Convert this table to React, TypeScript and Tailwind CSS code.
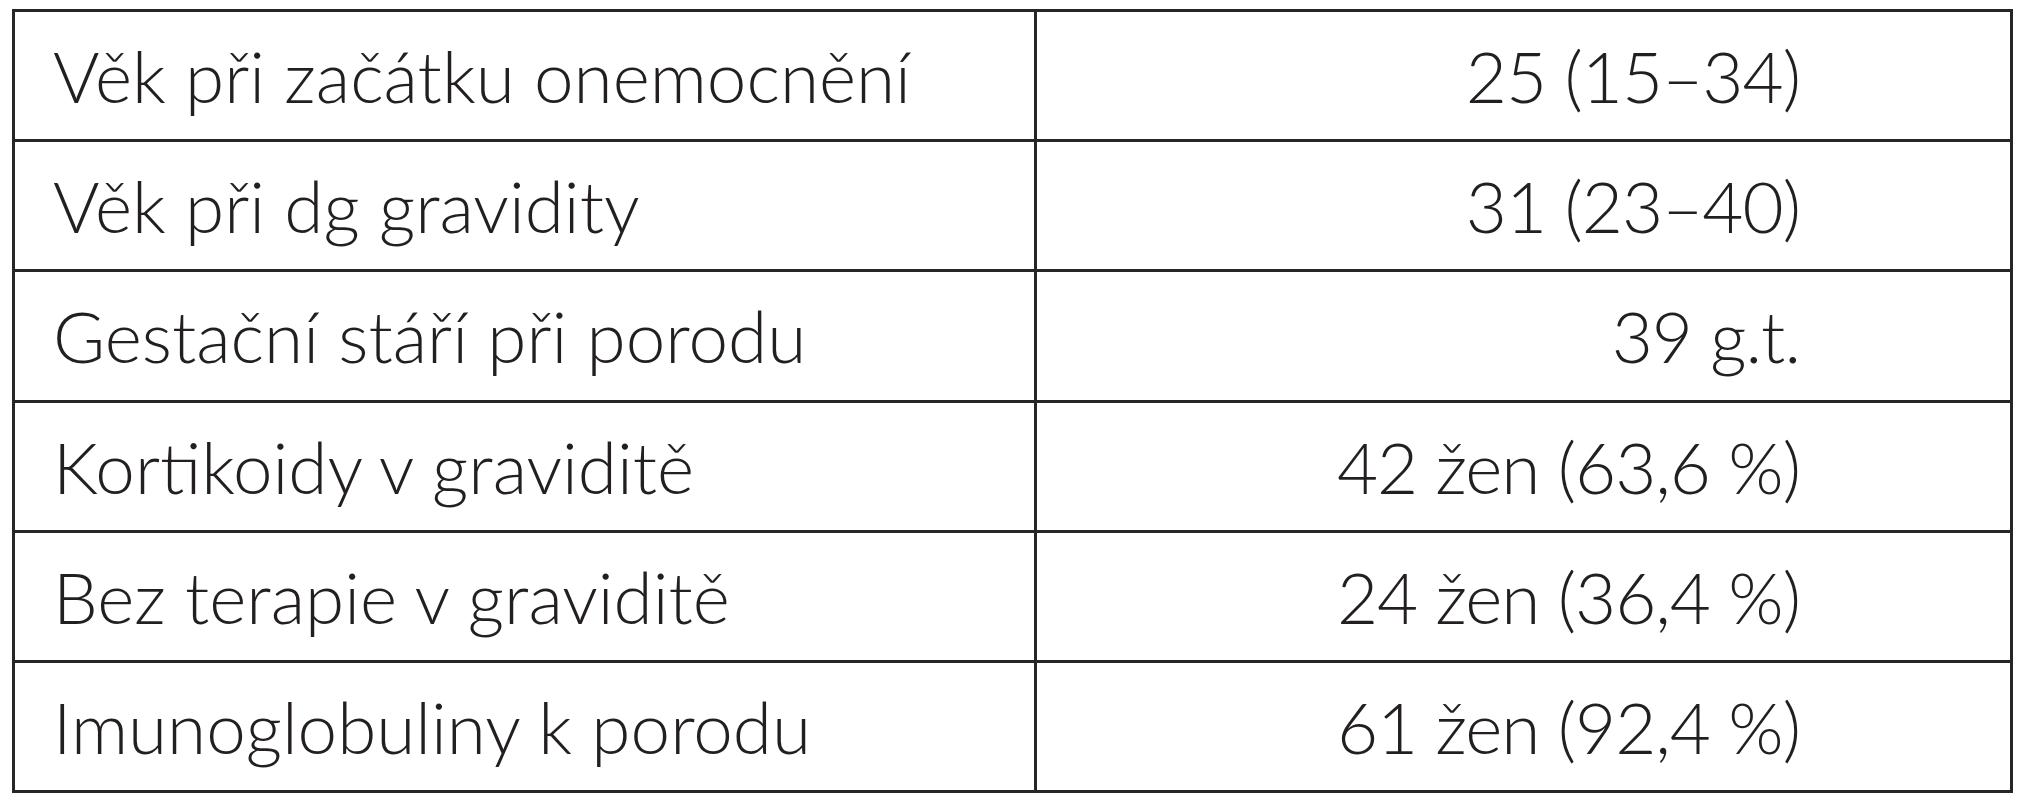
import React from "react";

const rows: [string, string][] = [
  ["Věk při začátku onemocnění", "25 (15–34)"],
  ["Věk při dg gravidity", "31 (23–40)"],
  ["Gestační stáří při porodu", "39 g.t."],
  ["Kortikoidy v graviditě", "42 žen (63,6 %)"],
  ["Bez terapie v graviditě", "24 žen (36,4 %)"],
  ["Imunoglobuliny k porodu", "61 žen (92,4 %)"],
];

export default function App() {
  return (
    <div className="w-[2018px] h-[800px] bg-white pt-[9px] pl-[12px]">
      <div
        className="w-[2001px] h-[784px] border-[3px] border-[#262626] flex flex-col text-[#231f20]"
        style={{ fontFamily: "Lato, 'Open Sans', sans-serif" }}
      >
        {rows.map(([a, b], i) => (
          <div
            key={i}
            className={`flex flex-1 ${i > 0 ? "border-t-[3px] border-[#262626]" : ""}`}
          >
            <div className="w-[1022px] border-r-[3px] border-[#262626] flex items-center pl-[38px] text-[71px] font-light leading-none whitespace-nowrap">
              {a}
            </div>
            <div className="flex-1 flex items-center justify-end pr-[210px] text-[71px] font-light leading-none whitespace-nowrap tracking-[-1px]">
              {b}
            </div>
          </div>
        ))}
      </div>
    </div>
  );
}
